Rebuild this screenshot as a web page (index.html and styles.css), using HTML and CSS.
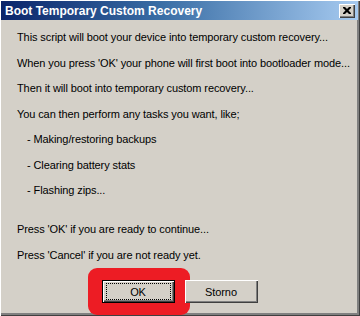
FILE: index.html
```html
<!DOCTYPE html>
<html>
<head>
<meta charset="utf-8">
<link rel="stylesheet" href="styles.css">
</head>
<body>
<div class="window">
  <div class="titlebar">
    <span class="title">Boot Temporary Custom Recovery</span>
    <span class="close"><svg width="8" height="7" viewBox="0 0 8 7"><path d="M0 0h2l2 2 2-2h2v1l-2.5 2.5L8 6v1H6L4 5 2 7H0V6l2.5-2.5L0 1z" fill="#000"/></svg></span>
  </div>
  <div class="content">
    <div class="line">This script will boot your device into temporary custom recovery...</div>
    <div class="line">When you press 'OK' your phone will first boot into bootloader mode...</div>
    <div class="line">Then it will boot into temporary custom recovery...</div>
    <div class="line">You can then perform any tasks you want, like;</div>
    <div class="line indent">- Making/restoring backups</div>
    <div class="line indent">- Clearing battery stats</div>
    <div class="line indent">- Flashing zips...</div>
    <div class="spacer"></div>
    <div class="line">Press 'OK' if you are ready to continue...</div>
    <div class="line">Press 'Cancel' if you are not ready yet.</div>
  </div>
  <div class="buttons">
    <div class="highlight"></div>
    <button class="btn default"><span class="focus">OK</span></button>
    <button class="btn">Storno</button>
  </div>
</div>
</body>
</html>
```
FILE: styles.css
```css
html, body {
  margin: 0;
  padding: 0;
  background: #d4d0c8;
}
.window {
  width: 360px;
  height: 316px;
  box-sizing: border-box;
  background: #d4d0c8;
  padding: 1px 2px 3px 1px;
  box-shadow: inset 1px 1px 0 #fff, inset -1px -1px 0 #404040, inset -3px -3px 0 #808080;
  display: flex;
  flex-direction: column;
  font-family: "Liberation Sans", Arial, sans-serif;
  font-size: 11px;
  letter-spacing: -0.1px;
  color: #000;
  position: relative;
  overflow: hidden;
}
.titlebar {
  height: 19px;
  background: linear-gradient(to right, #0a246a 0%, #3a6ea5 45%, #a6caf0 100%);
  display: flex;
  align-items: center;
  justify-content: space-between;
  padding: 0 3px 0 4px;
}
.title {
  color: #fff;
  font-weight: bold;
  font-size: 12px;
  letter-spacing: 0;
}
.close {
  width: 16px;
  height: 14px;
  box-sizing: border-box;
  background: #d4d0c8;
  box-shadow: inset 1px 1px 0 #fff, inset -1px -1px 0 #404040, inset -2px -2px 0 #808080;
  display: flex;
  align-items: center;
  justify-content: center;
}
.content {
  padding: 5px 0 0 16px;
  display: flex;
  flex-direction: column;
}
.line {
  height: 25.5px;
  line-height: 25.5px;
  white-space: nowrap;
}
.indent {
  padding-left: 10px;
}
.spacer {
  height: 13.5px;
}
.buttons {
  position: relative;
  display: flex;
  justify-content: center;
  gap: 10px;
  margin-top: 12px;
}
.highlight {
  position: absolute;
  left: 87px;
  top: -12px;
  width: 102px;
  height: 47px;
  background: #ed1c24;
  border-radius: 9px;
}
.btn {
  position: relative;
  width: 73px;
  height: 23px;
  box-sizing: border-box;
  border: none;
  background: #d4d0c8;
  font-family: "Liberation Sans", Arial, sans-serif;
  font-size: 11px;
  letter-spacing: -0.1px;
  color: #000;
  box-shadow: inset 1px 1px 0 #fff, inset -1px -1px 0 #404040, inset -2px -2px 0 #808080;
  padding: 0;
  display: flex;
  align-items: center;
  justify-content: center;
}
.btn.default {
  border: 1px solid #000;
}
.focus {
  display: flex;
  align-items: center;
  justify-content: center;
  width: 63px;
  height: 15px;
  border: 1px dotted #000;
}
```
